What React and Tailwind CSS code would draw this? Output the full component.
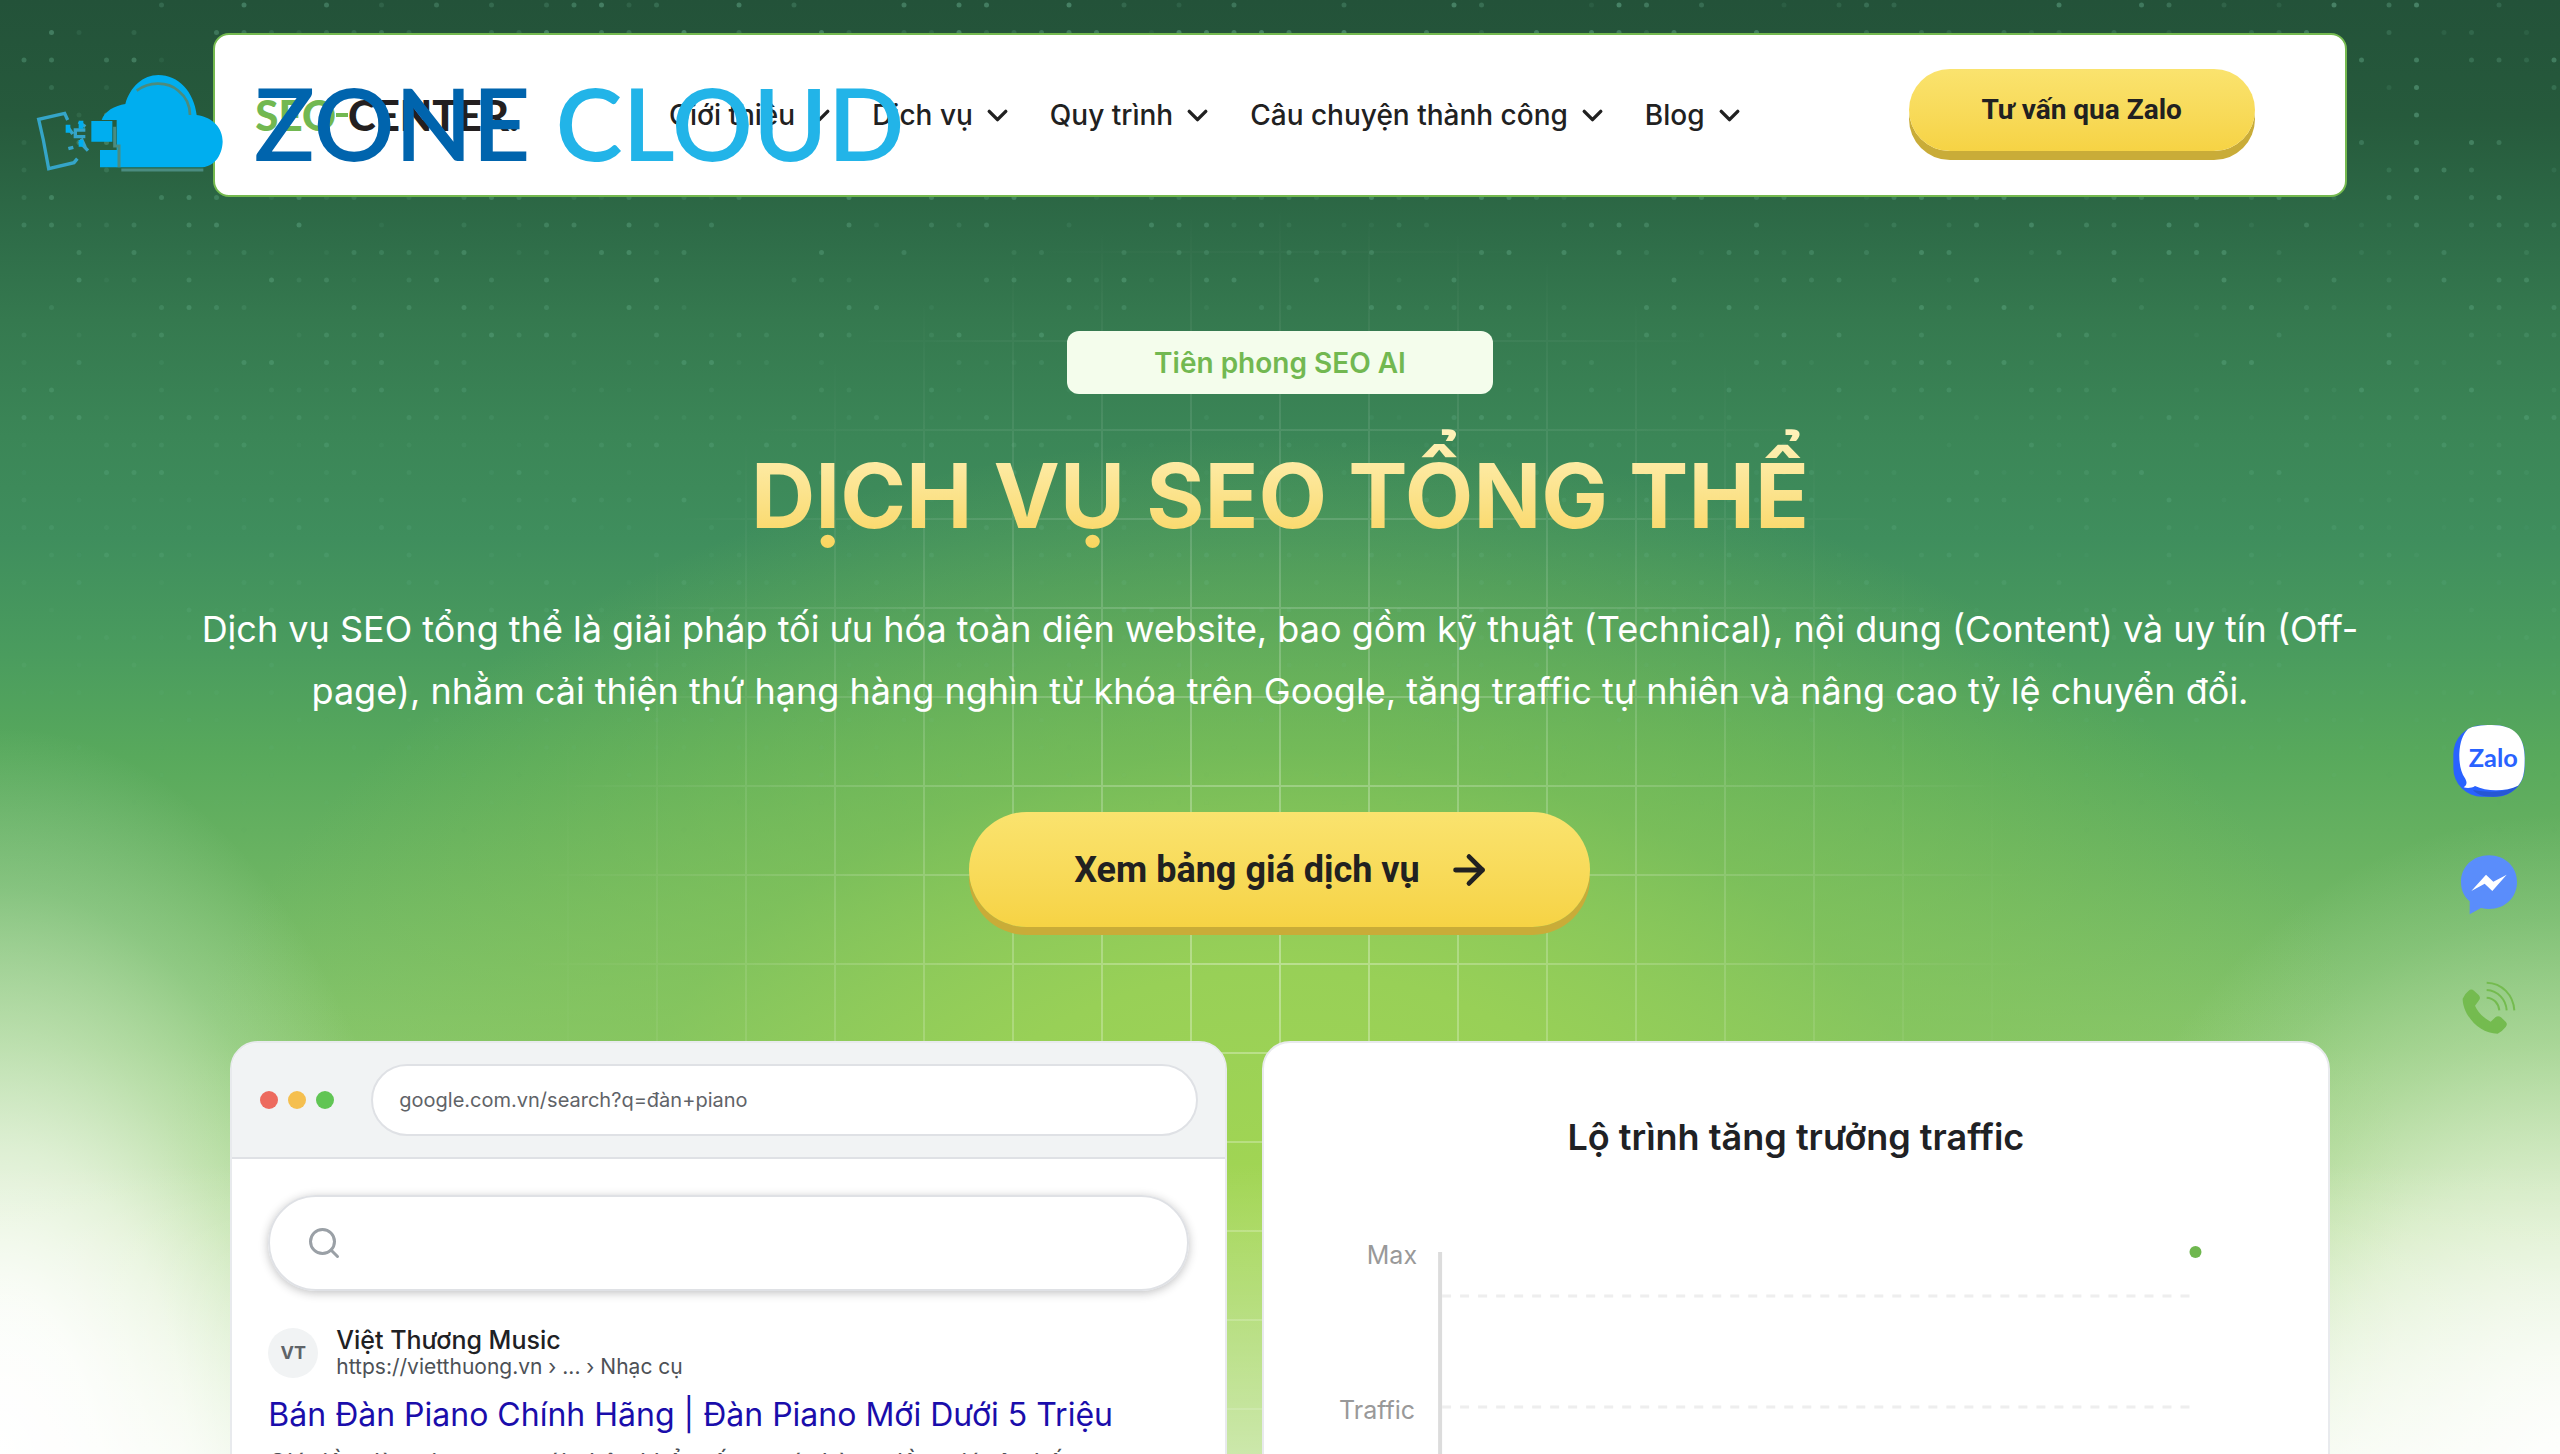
import { ArrowRight, ChevronDown, Search } from 'lucide-react'

const navItems = ['Giới thiệu', 'Dịch vụ', 'Quy trình', 'Câu chuyện thành công', 'Blog']

const windowDots = ['bg-[#ed6a5e]', 'bg-[#f5bf4f]', 'bg-[#61c554]']

// scattered dots, brightness falls off towards the bottom
const dots = []
for (let r = 0; r < 31; r++) {
  for (let c = 0; c < 93; c++) {
    const n = Math.abs(Math.sin(r * 127.1 + c * 311.7) * 43758.5453) % 1
    if (n > 0.45) {
      dots.push({ x: 24 + c * 27.5, y: 5 + r * 27.5, o: (n - 0.3) * 0.6 * (1 - r / 31) })
    }
  }
}

function Background() {
  return (
    <div className="absolute inset-0 bg-[linear-gradient(180deg,#235239_0%,#265a3c_8%,#2e6c48_16%,#35794f_22%,#3b8657_30%,#3f8e5d_37%,#4a9c5e_45%,#58a95c_52%,#6bb462_60%,#88c66e_72%,#b4dc92_85%,#e4f2d4_100%)]">
      <div className="absolute inset-0 bg-[radial-gradient(ellipse_44%_54%_at_50%_84%,#a3d653_0%,#98d057_32%,#86c65699_60%,#6ab45800_100%)]" />
      <div className="absolute inset-0 bg-[radial-gradient(ellipse_17%_50%_at_0%_100%,#ffffff_0%,#ffffffe6_20%,#ffffffa6_42%,#e4f3e080_60%,#cdebd340_78%,#cdebd300_100%)]" />
      <div className="absolute inset-0 bg-[radial-gradient(ellipse_20%_44%_at_100%_100%,#ffffffe6_0%,#ffffffb3_22%,#ffffff80_45%,#e4f3e059_65%,#cdebd326_84%,#cdebd300_100%)]" />
      <div className="absolute inset-x-0 bottom-0 h-1/5 bg-linear-to-b from-white/0 to-white/50" />
      <svg className="absolute inset-0 size-full" viewBox="0 0 2560 1454" preserveAspectRatio="xMidYMin slice" aria-hidden="true">
        <defs>
          <pattern id="grid" width="89" height="89" x="33" y="-16" patternUnits="userSpaceOnUse">
            <path d="M0 0H89M0 0V89" stroke="#fff" strokeWidth="4" fill="none" />
          </pattern>
          <radialGradient id="fade">
            <stop offset="0" stopColor="#fff" stopOpacity=".34" />
            <stop offset=".5" stopColor="#fff" stopOpacity=".17" />
            <stop offset="1" stopColor="#fff" stopOpacity="0" />
          </radialGradient>
          <mask id="gridMask">
            <ellipse cx="1280" cy="980" rx="760" ry="780" fill="url(#fade)" />
          </mask>
        </defs>
        {dots.map((d, i) => (
          <circle key={i} cx={d.x} cy={d.y} r="2.5" fill="#7cc9a8" opacity={d.o} />
        ))}
        <rect width="2560" height="1454" fill="url(#grid)" mask="url(#gridMask)" />
      </svg>
    </div>
  )
}

function ZoneCloud() {
  return (
    <div className="pointer-events-none absolute left-5 top-[60px] z-20 flex items-start">
      <svg className="h-[120px] w-[210px]" viewBox="0 0 630 360" fill="#00aeef" aria-hidden="true">
        <path d="M290 322V180H245C252 155 285 136 316 132C330 80 370 45 415 45C475 45 522 95 530 165C580 172 608 205 608 245C606 290 580 322 540 322Z" />
        <path d="M350 92C385 66 440 62 475 92C500 112 510 140 510 165" fill="none" stroke="#4d8b7c" strokeWidth="8" />
        <path d="M214 183H277V245H214ZM240 270H291V322H240Z" />
        <path d="M284 200V258H297V322M304 330H550" fill="none" stroke="#4b8c80" strokeWidth="9" />
        <g fill="none" stroke="#35a5c8" strokeWidth="10">
          <path d="M143 180L134 160L56 178L70 240L86 326L162 308L172 296" />
          <path d="M143 200L158 222M160 262L145 266M176 186L196 200M196 210H166V230H196M178 245L204 272M184 236L196 262" />
        </g>
        <path d="M176 182H190V206H176ZM137 194H151V218H137ZM176 240H190V260H176Z" />
      </svg>
      <p className="ml-6 font-['Lato',sans-serif] text-[101px] leading-[124px] font-semibold whitespace-nowrap text-[#0064ad]">
        ZONE <span className="text-[#22b4e8]">CLOUD</span>
      </p>
    </div>
  )
}

function Header() {
  return (
    <header className="mx-auto mt-[33px] flex h-[164px] w-5/6 items-center rounded-2xl border-2 border-[#74b94f] bg-white pr-[90px] pl-10">
      <a href="#" className="flex items-center font-['Lato',sans-serif] text-[42px] font-black text-[#231f20]">
        <span className="text-[#72b851]">SEO</span>
        <span className="h-1 w-3 bg-[#72b851]" />
        CENTER.
      </a>
      <nav className="ml-[150px] flex items-center gap-9">
        {navItems.map((item) => (
          <a key={item} href="#" className="flex items-center gap-2 text-[28px] font-medium whitespace-nowrap text-[#212121]">
            {item}
            <ChevronDown className="size-[33px]" strokeWidth={2.5} />
          </a>
        ))}
      </nav>
      <button className="mb-2.5 ml-auto h-[82px] w-[346px] rounded-full bg-linear-to-b from-[#fae36e] to-[#f6d344] font-['Roboto',sans-serif] text-[28px] font-bold text-[#212121] shadow-[0_9px_0_#c9ac38]">
        Tư vấn qua Zalo
      </button>
    </header>
  )
}

function SearchCard() {
  return (
    <section className="min-w-0 flex-[996] overflow-hidden rounded-[28px] border-2 border-[#e8eaed] bg-white">
      <div className="flex h-[116px] items-center gap-[37px] border-b-2 border-[#dfe1e5] bg-[#f1f3f4] pr-[27px] pl-7">
        <div className="flex gap-2.5">
          {windowDots.map((d) => (
            <span key={d} className={`size-[18px] rounded-full ${d}`} />
          ))}
        </div>
        <div className="flex h-[72px] flex-1 items-center rounded-full border-2 border-[#dfe1e5] bg-white px-[26px] text-xl text-[#5f6368]">
          google.com.vn/search?q=đàn+piano
        </div>
      </div>
      <div className="px-9 pt-9">
        <label className="flex h-24 items-center gap-5 rounded-full border-2 border-[#dfe1e5] px-9 shadow-[0_2px_10px_rgba(32,33,36,0.28)]">
          <Search className="size-9 text-[#9aa0a6]" strokeWidth={2} />
          <input className="h-full min-w-0 flex-1 outline-none" aria-label="Tìm kiếm" />
        </label>
        <div className="mt-[35px] flex items-center gap-[18px]">
          <span className="flex size-[50px] items-center justify-center rounded-full bg-[#f1f3f4] text-lg font-bold text-[#5f6368]">VT</span>
          <div>
            <p className="text-[25px] leading-7 font-medium text-[#202124]">Việt Thương Music</p>
            <p className="text-[21px] leading-[26px] text-[#4d5156]">https://vietthuong.vn › ... › Nhạc cụ</p>
          </div>
        </div>
        <a href="#" className="mt-2.5 block text-[32px] leading-[50px] whitespace-nowrap text-[#1a0dab]">
          Bán Đàn Piano Chính Hãng | Đàn Piano Mới Dưới 5 Triệu
        </a>
        <p className="mt-[3px] text-[25px] leading-10 text-[#4d5156]">
          Giá tiền đàn piano cơ mới nhập khẩu tốt, uy tín hàng đầu, giá rẻ nhất
        </p>
      </div>
    </section>
  )
}

function TrafficCard() {
  return (
    <section className="min-w-0 flex-[1067] rounded-[28px] border-2 border-[#e8eaed] bg-white">
      <h2 className="mt-[67px] text-center text-[36px] leading-[54px] font-semibold text-[#202124]">
        Lộ trình tăng trưởng traffic
      </h2>
      <svg className="mt-[37px] w-full" viewBox="0 0 1063 400" role="img" aria-label="Traffic">
        <path d="M176 51V400" stroke="#dcdcdc" strokeWidth="4" />
        <path d="M178 95H932M178 206H932" stroke="#eeeeee" strokeWidth="3" strokeDasharray="9 9" />
        <circle cx="931" cy="51" r="6" fill="#6fb74f" />
        <g className="fill-[#999999] text-[25px]" textAnchor="end">
          <text x="153" y="63">Max</text>
          <text x="151" y="218">Traffic</text>
        </g>
      </svg>
    </section>
  )
}

function ContactLinks() {
  return (
    <aside className="absolute top-[725px] right-[35px] z-20 flex w-[72px] flex-col items-center gap-[58px]">
      <a href="#" aria-label="Zalo">
        <svg className="size-[72px]" viewBox="0 0 216 216">
          <rect width="214" height="214" x="1" y="1" rx="86" fill="#2962ff" />
          <path d="M60 195C120 205 165 200 197 180C180 205 150 215 120 215C90 215 70 208 60 195Z" fill="#2657d4" />
          <path d="M45 12C60 3 85 0 116 0C185 0 215 35 215 100C215 138 212 165 195 182C160 200 100 200 66 183C56 190 42 190 32 187C42 180 43 172 36 160C22 140 18 110 19 85C21 52 28 30 45 12Z" fill="#fff" />
          <text x="121" y="126" textAnchor="middle" className="fill-[#2962ff] font-['Lato',sans-serif] text-[76px] font-bold">Zalo</text>
        </svg>
      </a>
      <a href="#" aria-label="Messenger">
        <svg className="h-[60px] w-14" viewBox="0 0 168 178">
          <path d="M84 0C132 0 168 34 168 80C168 127 132 161 84 161C76 161 68 160 60 158L26 177V138C9 124 0 104 0 80C0 34 36 0 84 0Z" fill="#5a8dfb" />
          <path d="M31 107L75 58L97 79L137 58L94 107L71 85Z" fill="#fff" />
        </svg>
      </a>
      <a href="#" aria-label="Hotline" className="mt-2">
        <svg className="h-[54px] w-[54px]" viewBox="0 0 162 162">
          <path d="M20 29Q28 22 36 29L50 42Q57 50 51 58L39 74Q52 104 86 122L101 108Q109 103 117 109L131 122Q138 130 131 138Q121 151 107 158C50 158 2 100 2 53Q8 38 20 29Z" fill="#74bb4f" />
          <path d="M74 5C120 6 154 42 157 88M74 27C108 29 132 56 134 88M74 50C95 51 110 67 112 88" fill="none" stroke="#74bb4f" strokeWidth="6" />
        </svg>
      </a>
    </aside>
  )
}

export default function App() {
  return (
    <div className="relative flex h-screen flex-col overflow-hidden font-['Inter',sans-serif]">
      <Background />
      <ZoneCloud />
      <div className="relative z-10">
        <Header />
        <main className="mx-auto flex w-5/6 flex-col items-center">
          <p className="mt-[134px] flex h-[63px] w-1/5 items-center justify-center rounded-xl bg-[#f4fdec] text-[28px] font-semibold text-[#72b851]">
            Tiên phong SEO AI
          </p>
          <h1 className="mt-[31px] bg-linear-to-b from-[#fff3bd] to-[#f8d14a] bg-clip-text text-[89px] leading-[142px] font-bold text-transparent">
            DỊCH VỤ SEO TỔNG THỂ
          </h1>
          <p className="mt-[31px] w-[calc(100%+48px)] text-center text-[36px] leading-[62px] text-white">
            Dịch vụ SEO tổng thể là giải pháp tối ưu hóa toàn diện website, bao gồm kỹ thuật (Technical), nội dung
            (Content) và uy tín (Off-page), nhằm cải thiện thứ hạng hàng nghìn từ khóa trên Google, tăng traffic tự
            nhiên và nâng cao tỷ lệ chuyển đổi.
          </p>
          <button className="mt-[90px] flex h-[115px] w-[621px] items-center justify-center gap-[26px] rounded-full bg-linear-to-b from-[#fae36e] to-[#f6d344] pl-1.5 font-['Roboto',sans-serif] text-[36px] font-bold text-[#212121] shadow-[0_8px_0_#c9ac38]">
            Xem bảng giá dịch vụ
            <ArrowRight className="size-[46px]" strokeWidth={2.5} />
          </button>
          <div className="mt-[114px] flex h-[600px] w-full gap-[35px] px-[17px]">
            <SearchCard />
            <TrafficCard />
          </div>
        </main>
      </div>
      <ContactLinks />
    </div>
  )
}
